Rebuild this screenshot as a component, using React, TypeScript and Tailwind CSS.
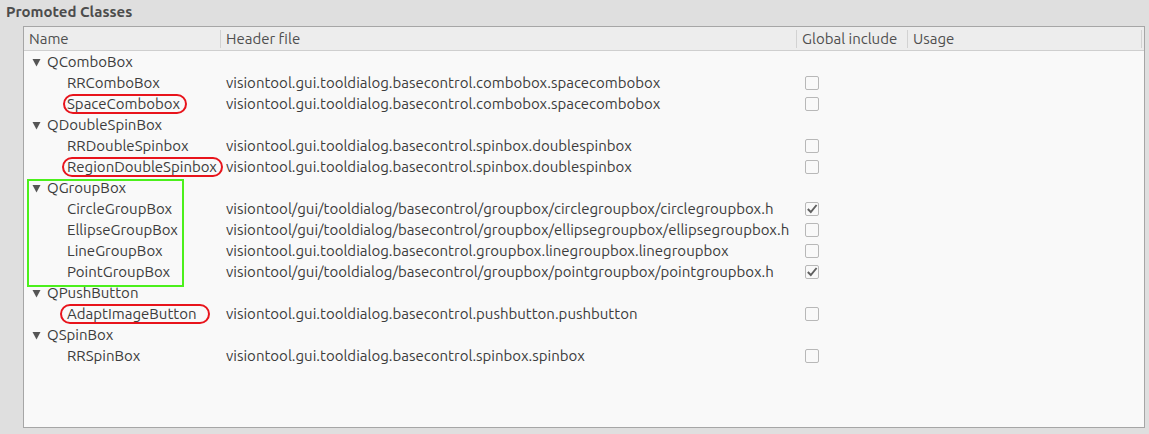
import React from "react";

type Child = { name: string; header: string; checked: boolean; mark?: string };
type Group = { name: string; children: Child[] };

const groups: Group[] = [
  {
    name: "QComboBox",
    children: [
      { name: "RRComboBox", header: "visiontool.gui.tooldialog.basecontrol.combobox.spacecombobox", checked: false },
      { name: "SpaceCombobox", header: "visiontool.gui.tooldialog.basecontrol.combobox.spacecombobox", checked: false, mark: "-ml-[4px] pl-[2px] pr-[5px]" },
    ],
  },
  {
    name: "QDoubleSpinBox",
    children: [
      { name: "RRDoubleSpinbox", header: "visiontool.gui.tooldialog.basecontrol.spinbox.doublespinbox", checked: false },
      { name: "RegionDoubleSpinbox", header: "visiontool.gui.tooldialog.basecontrol.spinbox.doublespinbox", checked: false, mark: "-ml-[5px] pl-[3px] pr-[4px]" },
    ],
  },
  {
    name: "QGroupBox",
    children: [
      { name: "CircleGroupBox", header: "visiontool/gui/tooldialog/basecontrol/groupbox/circlegroupbox/circlegroupbox.h", checked: true },
      { name: "EllipseGroupBox", header: "visiontool/gui/tooldialog/basecontrol/groupbox/ellipsegroupbox/ellipsegroupbox.h", checked: false },
      { name: "LineGroupBox", header: "visiontool.gui.tooldialog.basecontrol.groupbox.linegroupbox.linegroupbox", checked: false },
      { name: "PointGroupBox", header: "visiontool/gui/tooldialog/basecontrol/groupbox/pointgroupbox/pointgroupbox.h", checked: true },
    ],
  },
  {
    name: "QPushButton",
    children: [
      { name: "AdaptImageButton", header: "visiontool.gui.tooldialog.basecontrol.pushbutton.pushbutton", checked: false, mark: "-ml-[7px] pl-[5px] pr-[12px]" },
    ],
  },
  {
    name: "QSpinBox",
    children: [{ name: "RRSpinBox", header: "visiontool.gui.tooldialog.basecontrol.spinbox.spinbox", checked: false }],
  },
];

function Checkbox({ checked }: { checked: boolean }) {
  return (
    <span className="w-[14px] h-[14px] rounded-[2px] border border-[#b8b8b8] bg-[#f9f9f9] flex items-center justify-center">
      {checked && (
        <svg width="12" height="12" viewBox="0 0 12 12">
          <path d="M1.8 6 L4.8 9 L10.6 2" fill="none" stroke="#606060" strokeWidth="1.9" />
        </svg>
      )}
    </span>
  );
}

function Arrow() {
  return (
    <svg width="9" height="9" viewBox="0 0 9 9" className="mr-[6px]">
      <path d="M0.5 1 L8.5 1 L4.5 8.5 Z" fill="#555" />
    </svg>
  );
}

const cols = "grid grid-cols-[197px_576px_111px_1fr]";

export default function App() {
  return (
    <div className="w-[1149px] h-[434px] bg-[#dfdfdf] text-[15px] text-[#3c3c3c] font-['Ubuntu','Noto_Sans',sans-serif] overflow-hidden">
      <div className="pl-[6px] pt-[1px] h-[26px] font-bold text-[#4c4c4c]">Promoted Classes</div>
      <div className="ml-[23px] w-[1122px] h-[402px] border border-[#a6a6a6] bg-[#f9f9f9] flex flex-col">
        <div className={`${cols} h-[24px] bg-[#ededed] border-b border-[#cfcfcf] text-[#4f4f4f] items-center`}>
          <div className="pl-[5px] border-r border-[#d2d2d2] h-[18px] leading-[18px]">Name</div>
          <div className="pl-[5px] border-r border-[#d2d2d2] h-[18px] leading-[18px]">Header file</div>
          <div className="pl-[5px] border-r border-[#d2d2d2] h-[18px] leading-[18px]">Global include</div>
          <div className="pl-[5px] border-r border-[#d2d2d2] h-[18px] leading-[18px] mr-[2px]">Usage</div>
        </div>
        <div className="relative">
          {groups.map((g) => (
            <React.Fragment key={g.name}>
              <div className={`${cols} h-[21px] items-center`}>
                <div className="pl-[8px] flex items-center">
                  <Arrow />
                  <span>{g.name}</span>
                </div>
              </div>
              {g.children.map((c) => (
                <div key={c.name} className={`${cols} h-[21px] items-center`}>
                  <div className="pl-[43px] flex items-center whitespace-nowrap">
                    {c.mark ? (
                      <span className={`${c.mark} h-[20px] leading-[16px] border-2 border-[#e8141c] rounded-[10px]`}>
                        {c.name}
                      </span>
                    ) : (
                      <span>{c.name}</span>
                    )}
                  </div>
                  <div className="pl-[5px] whitespace-nowrap">{c.header}</div>
                  <div className="pl-[8px] flex items-center">
                    <Checkbox checked={c.checked} />
                  </div>
                  <div />
                </div>
              ))}
            </React.Fragment>
          ))}
          <span className="absolute left-[3px] top-[128px] w-[157px] h-[108px] border-2 border-[#4cf01c]" />
        </div>
      </div>
    </div>
  );
}
